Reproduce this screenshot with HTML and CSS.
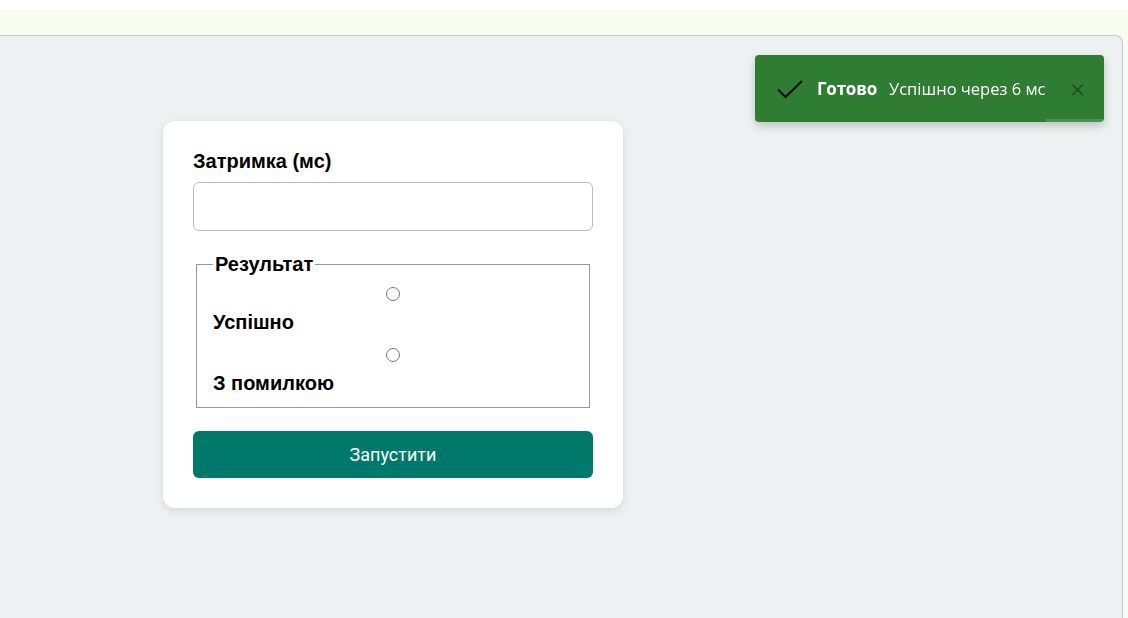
FILE: index.html
```html
<!DOCTYPE html>
<html lang="uk">
<head>
<meta charset="utf-8">
<link rel="stylesheet" href="styles.css">
</head>
<body>
<div class="page">
  <div class="panel">
    <form class="card">
      <label class="field-label" for="delay">Затримка (мс)</label>
      <input class="text-input" id="delay" type="text">
      <fieldset class="result">
        <legend class="legend">Результат</legend>
        <div class="option">
          <input class="radio" type="radio" name="res" id="ok">
          <label class="option-label" for="ok">Успішно</label>
        </div>
        <div class="option">
          <input class="radio" type="radio" name="res" id="err">
          <label class="option-label" for="err">З помилкою</label>
        </div>
      </fieldset>
      <button class="run" type="button">Запустити</button>
    </form>
  </div>
</div>
<div class="toast">
  <svg class="toast-icon" width="28" height="20" viewBox="0 0 28 20"><path d="M2 10.5 L9.5 18 L26 2" fill="none" stroke="#111" stroke-width="2"/></svg>
  <span class="toast-title">Готово</span>
  <span class="toast-msg">Успішно через 6 мс</span>
  <span class="toast-close">×</span>
  <div class="toast-progress"></div>
</div>
</body>
</html>
```
FILE: styles.css
```css
html, body {
  margin: 0;
  background: #ffffff;
  font-family: "Liberation Sans", Arial, sans-serif;
  overflow: hidden;
}
.page {
  margin-top: 10px;
  background: #f8fdef;
  padding-top: 25px;
  height: 583px;
}
.panel {
  width: 1123px;
  height: 600px;
  box-sizing: border-box;
  background: #edf1f2;
  border-top: 1px solid #c9cbc8;
  border-right: 1px solid #c9cbc8;
  border-top-right-radius: 8px;
  padding-top: 85px;
  padding-left: 163px;
}
.card {
  width: 460px;
  box-sizing: border-box;
  background: #fff;
  border-radius: 12px;
  box-shadow: 0 3px 10px rgba(0,0,0,0.1);
  padding: 29px 30px 30px;
  display: flex;
  flex-direction: column;
}
.field-label {
  font-weight: bold;
  font-size: 20px;
  line-height: 23px;
  color: #000;
  margin-bottom: 9px;
}
.text-input {
  height: 49px;
  box-sizing: border-box;
  border: 1px solid #bdbdbd;
  border-radius: 6px;
  margin: 0;
  font-size: 16px;
}
.result {
  margin: 22px 3px 0;
  padding: 0 16px 12px 16px;
  border: 1px solid #9a9a9a;
  min-width: 0;
}
.legend {
  font-weight: bold;
  font-size: 20px;
  padding: 0 2px;
  line-height: 23px;
}
.option {
  display: flex;
  flex-direction: column;
}
.radio {
  margin: 11px auto 10px;
  width: 14px;
  height: 14px;
}
.option + .option .radio {
  margin-top: 14px;
}
.option-label {
  font-weight: bold;
  font-size: 20px;
  line-height: 23px;
}
.run {
  margin-top: 23px;
  height: 47px;
  border: none;
  border-radius: 6px;
  background: #00796b;
  color: #fff;
  font-family: Roboto, "Noto Sans", sans-serif;
  font-size: 18px;
}
.toast {
  position: fixed;
  top: 55px;
  right: 24px;
  width: 349px;
  height: 67px;
  box-sizing: border-box;
  background: #2e7d32;
  border-radius: 4px;
  box-shadow: 0 4px 10px rgba(0,0,0,0.2);
  display: flex;
  align-items: center;
  padding: 0 18px 0 21px;
  overflow: hidden;
  color: #fff;
  font-family: "Open Sans", "Noto Sans", sans-serif;
}
.toast-icon {
  flex: none;
  margin-right: 13px;
}
.toast-title {
  font-weight: bold;
  font-size: 17px;
  margin-right: 12px;
  letter-spacing: -0.2px;
}
.toast-msg {
  font-size: 16.5px;
  flex: 1;
  letter-spacing: 0;
}
.toast-close {
  color: #1d3d20;
  font-size: 20px;
  font-family: "DejaVu Sans", sans-serif;
  opacity: 0.8;
}
.toast-progress {
  position: absolute;
  left: 291px;
  right: 0;
  bottom: 0;
  height: 3px;
  background: rgba(255,255,255,0.15);
}
```
